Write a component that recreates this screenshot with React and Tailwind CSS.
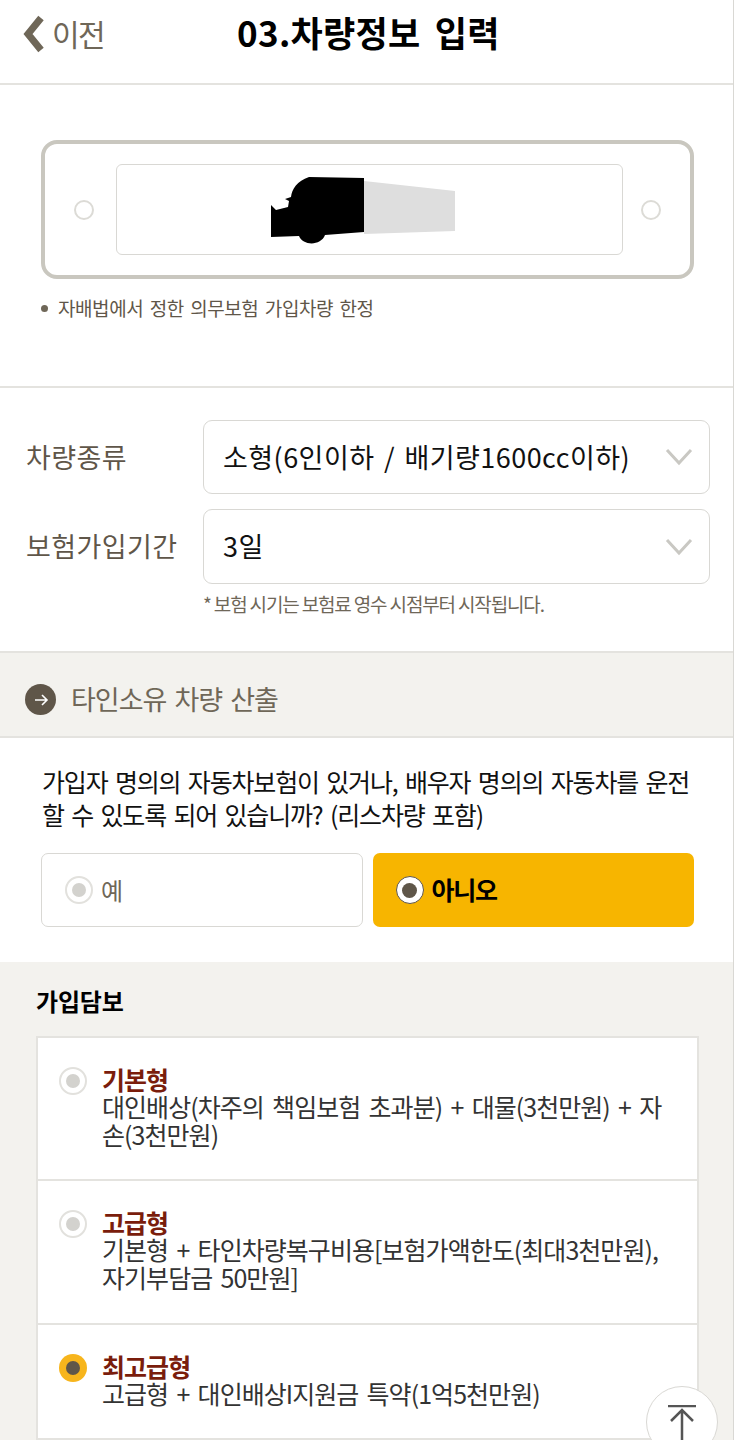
const font = { fontFamily: '"Noto Sans CJK KR", "Liberation Sans", sans-serif' };

const Radio = ({ state }) => {
    if (state === "on") {
        return (
            <span className="flex shrink-0 items-center justify-center w-[28px] h-[28px] rounded-full bg-[#f7b51c]">
                <span className="w-[14px] h-[14px] rounded-full bg-[#5f5649]" />
            </span>
        );
    }
    if (state === "dark") {
        return (
            <span className="flex shrink-0 items-center justify-center w-[28px] h-[28px] rounded-full bg-white border border-[#5f5649]">
                <span className="w-[15px] h-[15px] rounded-full bg-[#5f5649]" />
            </span>
        );
    }
    return (
        <span className="flex shrink-0 items-center justify-center w-[28px] h-[28px] rounded-full bg-white border-2 border-[#e2e1dd]">
            <span className="w-[14px] h-[14px] rounded-full bg-[#d3d2ce]" />
        </span>
    );
};

const SelectRow = ({ label, value, h }) => (
    <div className="flex items-center">
        <div className="w-[177px] shrink-0 text-[27px] tracking-[0.4px] text-[#5f5649]">{label}</div>
        <div className={`flex flex-1 items-center justify-between pl-[19px] pr-[16px] bg-white border border-[#d9d8d4] rounded-[9px] ${h}`}>
            <span className="text-[27px] tracking-[0.45px] [word-spacing:3px] text-[#111] whitespace-nowrap">{value}</span>
            <svg width="28" height="18" viewBox="0 0 28 18" fill="none" stroke="#c9c8c3" strokeWidth="3">
                <path d="M2 2 L14 15 L26 2" />
            </svg>
        </div>
    </div>
);

const Plan = ({ title, desc, state, h }) => (
    <div className={`flex items-start pl-[21px] pr-[30px] border-b-2 border-[#e4e3df] ${h}`}>
        <div className="mr-[15px] mt-[29px]">
            <Radio state={state} />
        </div>
        <div className="pt-[27px] text-[25px] leading-[28px] tracking-[-0.95px] [word-spacing:3.6px] text-[#333]">
            <div className="-mb-px font-bold text-[#7a1d0c]">{title}</div>
            <div>{desc}</div>
        </div>
    </div>
);

export default function App() {
    return (
        <div style={font} className="relative w-[734px] h-[1440px] overflow-hidden bg-white border-r border-[#d9d8d4]">
            <header className="flex items-center h-[85px] pb-[16px] border-b-2 border-[#e4e3df]">
                <div className="flex items-center w-[236px] pl-[22px]">
                    <svg width="24" height="38" viewBox="0 0 24 38" className="mr-[6px]">
                        <path d="M19 3 L6 19 L19 35" fill="none" stroke="#6f6758" strokeWidth="7" />
                    </svg>
                    <span className="text-[30px] tracking-[-1.7px] text-[#6f6758]">이전</span>
                </div>
                <h1 className="ml-px -mt-[2px] text-[35px] font-bold tracking-[0.3px] [word-spacing:6px] text-black whitespace-nowrap">03.차량정보 입력</h1>
            </header>

            <section className="h-[303px] pt-[55px] pl-[41px] pr-[39px] border-b-2 border-[#e4e3df]">
                <div className="flex items-center justify-between h-[139px] px-[29px] border-[4px] border-[#c9c7bf] rounded-[16px]">
                    <span className="w-[20px] h-[20px] rounded-full border-2 border-[#dcdbd6]" />
                    <div className="flex items-center justify-center w-[507px] h-[91px] ml-[3px] border border-[#d9d8d4] rounded-[6px]">
                        <svg width="185" height="67" viewBox="0 0 185 67" className="mr-[11px] mt-[2px]">
                            <path d="M93 4 L184 14 L184 54 L93 57 Z" fill="#dedede" />
                            <path d="M0 28 L5 33 L17 30 L18 24 L14 22 L20 20 C21 12 26 4 38 0 L93 1 L93 55 L54 58 C50 69 32 69 28 59 L0 60 Z" fill="#000" />
                        </svg>
                    </div>
                    <span className="w-[20px] h-[20px] rounded-full border-2 border-[#dcdbd6]" />
                </div>
                <div className="flex items-center mt-[15px] text-[19px] tracking-[-0.43px] [word-spacing:2.6px] text-[#5f5649]">
                    <span className="w-[7px] h-[7px] mr-[10px] rounded-full bg-[#6f6758]" />
                    자배법에서 정한 의무보험 가입차량 한정
                </div>
            </section>

            <section className="h-[263px] pt-[32px] pl-[26px] pr-[23px]">
                <div className="flex flex-col gap-[15px]">
                    <SelectRow label="차량종류" value="소형(6인이하 / 배기량1600cc이하)" h="h-[74px]" />
                    <SelectRow label="보험가입기간" value="3일" h="h-[75px]" />
                </div>
                <p className="ml-[177px] mt-[6px] text-[19px] tracking-[-1.15px] text-[#6f6758]">* 보험 시기는 보험료 영수 시점부터 시작됩니다.</p>
            </section>

            <section className="flex items-center h-[87px] pt-[10px] pl-[25px] bg-[#f3f2ee] border-y-2 border-[#e4e3df]">
                <span className="flex items-center justify-center w-[31px] h-[31px] mr-[15px] rounded-full bg-[#5f5649]">
                    <svg width="16" height="16" viewBox="0 0 16 16" fill="none" stroke="#fff" strokeWidth="1.6">
                        <path d="M2 8 H14 M9 3 L14 8 L9 13" />
                    </svg>
                </span>
                <span className="text-[27px] tracking-[-1px] [word-spacing:3px] text-[#6f6758]">타인소유 차량 산출</span>
            </section>

            <section className="h-[224px] pt-[27px] pl-[41px] pr-[39px]">
                <p className="ml-px text-[25px] leading-[33px] tracking-[-1.17px] [word-spacing:3px] text-[#111] whitespace-nowrap">
                    가입자 명의의 자동차보험이 있거나, 배우자 명의의 자동차를 운전
                    <br />
                    할 수 있도록 되어 있습니까? (리스차량 포함)
                </p>
                <div className="grid grid-cols-2 gap-[10px] mt-[22px]">
                    <div className="flex items-center h-[74px] pl-[23px] border border-[#d9d8d4] rounded-[7px]">
                        <Radio state="off" />
                        <span className="ml-[8px] text-[24px] text-[#6f6758]">예</span>
                    </div>
                    <div className="flex items-center h-[74px] pl-[23px] bg-[#f7b500] rounded-[7px]">
                        <Radio state="dark" />
                        <span className="ml-[8px] text-[25px] font-bold tracking-[-1.3px] text-black">아니오</span>
                    </div>
                </div>
            </section>

            <section className="h-[480px] pt-[21px] pl-[36px] pr-[34px] bg-[#f3f2ee]">
                <h2 className="text-[24px] font-bold tracking-[-0.2px] text-black">가입담보</h2>
                <div className="mt-[17px] bg-white border-x-2 border-t-2 border-[#e4e3df]">
                    <Plan title="기본형" desc="대인배상(차주의 책임보험 초과분) + 대물(3천만원) + 자손(3천만원)" state="off" h="h-[143px]" />
                    <Plan title="고급형" desc={<>기본형 + 타인차량복구비용[보험가액한도(최대3천만원),<br />자기부담금 50만원]</>} state="off" h="h-[144px]" />
                    <Plan title="최고급형" desc="고급형 + 대인배상I지원금 특약(1억5천만원)" state="on" h="h-[115px]" />
                </div>
            </section>

            <button className="absolute left-[646px] top-[1386px] flex justify-center w-[72px] h-[72px] pt-[18px] bg-white border border-[#d9d8d4] rounded-full">
                <svg width="28" height="36" viewBox="0 0 28 36" fill="none" stroke="#555" strokeWidth="2.5">
                    <path d="M0 1 H28 M14 5 V36 M3 16 L14 5 L25 16" />
                </svg>
            </button>
        </div>
    );
}
